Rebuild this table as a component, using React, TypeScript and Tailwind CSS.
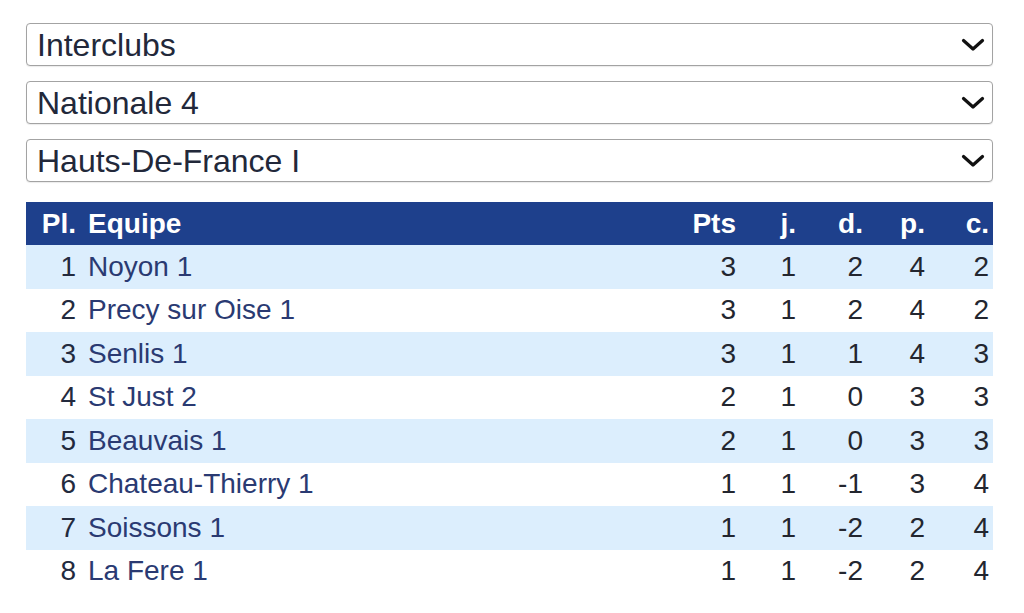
import React from "react";

const rows: [number, string, number, number, number, number, number][] = [
  [1, "Noyon 1", 3, 1, 2, 4, 2],
  [2, "Precy sur Oise 1", 3, 1, 2, 4, 2],
  [3, "Senlis 1", 3, 1, 1, 4, 3],
  [4, "St Just 2", 2, 1, 0, 3, 3],
  [5, "Beauvais 1", 2, 1, 0, 3, 3],
  [6, "Chateau-Thierry 1", 1, 1, -1, 3, 4],
  [7, "Soissons 1", 1, 1, -2, 2, 4],
  [8, "La Fere 1", 1, 1, -2, 2, 4],
];

function Select({ label }: { label: string }) {
  return (
    <div className="flex h-[43px] items-center justify-between rounded-[4px] border border-[#a3a3a3] bg-white pl-[10px] pr-[7px] shadow-[0_1px_1px_rgba(0,0,0,0.08)]">
      <span className="text-[32px] leading-none text-[#22283a]">{label}</span>
      <svg width="24" height="14" viewBox="0 0 24 14" fill="none">
        <path d="M2.5 2.5 L12 11 L21.5 2.5" stroke="#111" strokeWidth="3.2" strokeLinecap="round" strokeLinejoin="round" />
      </svg>
    </div>
  );
}

const grid = "grid grid-cols-[50px_604px_56px_60px_67px_62px_64px_4px]";

export default function App() {
  return (
    <div className="min-h-[613px] w-[1024px] bg-white px-[26px] pt-[23px] font-['Liberation_Sans',Arial,sans-serif]">
      <div className="flex w-[967px] flex-col gap-[15px]">
        <Select label="Interclubs" />
        <Select label="Nationale 4" />
        <Select label="Hauts-De-France I" />
      </div>
      <div className="mt-[20px] w-[967px]">
        <div className={`${grid} h-[43px] items-center bg-[#1e408c] text-[28px] font-bold leading-none text-white`}>
          <span className="text-right">Pl.</span>
          <span className="pl-[12px]">Equipe</span>
          <span className="text-right">Pts</span>
          <span className="text-right">j.</span>
          <span className="text-right">d.</span>
          <span className="text-right">p.</span>
          <span className="text-right">c.</span>
          <span />
        </div>
        {rows.map((r, i) => (
          <div
            key={r[0]}
            className={`${grid} h-[43.5px] items-center text-[28px] leading-none text-[#23262f] ${i % 2 === 0 ? "bg-[#dceefd]" : "bg-white"}`}
          >
            <span className="text-right text-[#232a3e]">{r[0]}</span>
            <span className="pl-[12px] text-[#2a3a72]">{r[1]}</span>
            <span className="text-right">{r[2]}</span>
            <span className="text-right">{r[3]}</span>
            <span className="text-right">{r[4]}</span>
            <span className="text-right">{r[5]}</span>
            <span className="text-right">{r[6]}</span>
            <span />
          </div>
        ))}
      </div>
    </div>
  );
}
